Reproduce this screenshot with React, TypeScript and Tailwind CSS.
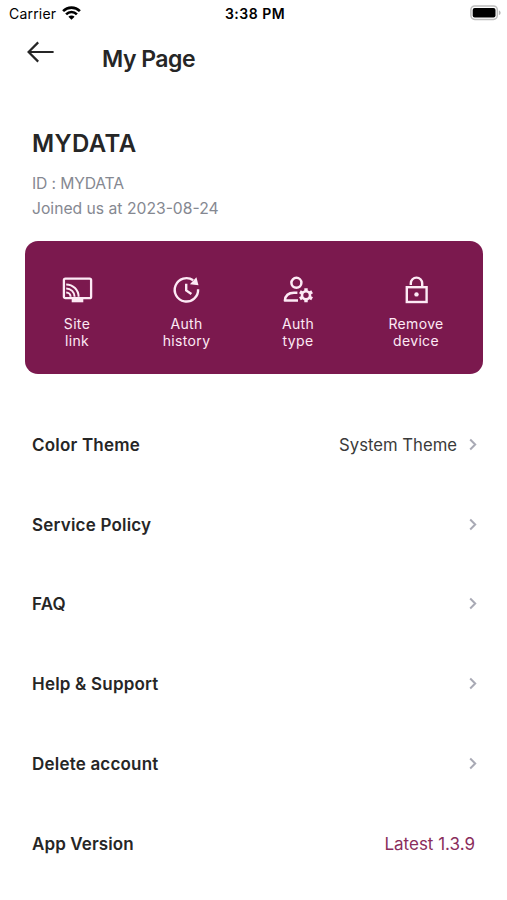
import React from 'react';

const menuItems = [
    { label: 'Color Theme', value: 'System Theme' },
    { label: 'Service Policy' },
    { label: 'FAQ' },
    { label: 'Help & Support' },
    { label: 'Delete account' }
];

/** Quick action icons, all on a 32px canvas */

function SiteLinkIcon() {
    return (
        <svg width="32" height="32" viewBox="0 0 32 32" fill="none" stroke="currentColor" strokeWidth="2.3">
            <rect x="2.9" y="4.6" width="27.2" height="19.6" rx="1.5" />
            <path d="M10.7 26.6h11.6" strokeWidth="3.4" />
            <path d="M5.2 10.4a12.4 12.4 0 0 1 12.4 12.4M5.2 14.4a8.4 8.4 0 0 1 8.4 8.4M5.2 18.4a4.4 4.4 0 0 1 4.4 4.4" strokeWidth="2" />
        </svg>
    );
}

function HistoryIcon() {
    return (
        <svg width="32" height="32" viewBox="0 0 32 32" fill="none" stroke="currentColor" strokeWidth="2.4">
            <path d="M27.1 15.2A11.7 11.7 0 1 1 22.2 6.3" />
            <path d="M25.4 3.2L27.5 11.2L18.9 10.2Z" fill="currentColor" stroke="none" />
            <path d="M15.2 9.8v6.6l5.2 3.6" />
        </svg>
    );
}

function AuthTypeIcon() {
    return (
        <svg width="32" height="32" viewBox="0 0 32 32" fill="none" stroke="currentColor" strokeWidth="2.5">
            <circle cx="14.4" cy="8.8" r="5" />
            <path d="M15.4 18.8H12C6 18.8 3.3 21.6 2.9 26.6H16" strokeLinejoin="round" />
            <circle cx="24" cy="21.3" r="4" strokeWidth="2.6" />
            <path
                d="M24 17.5v-3.2M24 25.1v3.2M20.5 19.3l-2.6-1.5M27.5 23.3l2.6 1.5M20.5 23.3l-2.6 1.5M27.5 19.3l2.6-1.5"
                strokeWidth="3.4"
            />
        </svg>
    );
}

function UnlockIcon() {
    return (
        <svg width="32" height="32" viewBox="0 0 32 32" fill="none" stroke="currentColor" strokeWidth="2.4">
            <rect x="6.8" y="13.2" width="19.8" height="14.8" />
            <path d="M10.8 11V9.3a5.7 5.7 0 0 1 11.4 0v3.9" />
            <circle cx="16.5" cy="20.4" r="2.2" fill="currentColor" stroke="none" />
        </svg>
    );
}

const actions = [
    { icon: <SiteLinkIcon />, lines: ['Site', 'link'] },
    { icon: <HistoryIcon />, lines: ['Auth', 'history'] },
    { icon: <AuthTypeIcon />, lines: ['Auth', 'type'] },
    { icon: <UnlockIcon />, lines: ['Remove', 'device'] }
];

function Chevron() {
    return (
        <svg width="8" height="14" viewBox="0 0 8 14" fill="none" stroke="#a9aab5" strokeWidth="2">
            <path d="M1.2 1.5 6.2 6.5l-5 5" />
        </svg>
    );
}

function StatusBar() {
    return (
        <div className="grid h-7 grid-cols-3 items-center pl-[9px] pr-[6px] text-black">
            <div className="flex items-center gap-1.5">
                <span className="text-[14px] leading-7 tracking-[0.2px]">Carrier</span>
                <svg className="-mt-0.5" width="19" height="14" viewBox="0 0 19 14" fill="none" stroke="currentColor" strokeWidth="2.6">
                    <path d="M1.1 5.1a11.9 11.9 0 0 1 16.8 0M4.1 8.3a7.6 7.6 0 0 1 10.8 0" />
                    <path d="M9.5 13.8 6.4 10.7a4.4 4.4 0 0 1 6.2 0Z" fill="currentColor" stroke="none" />
                </svg>
            </div>
            <span className="text-center text-[14px] font-semibold leading-7 tracking-[0.5px]">3:38 PM</span>
            <svg className="-mt-0.5 justify-self-end" width="31" height="16" viewBox="0 0 31 16">
                <rect x="0.9" y="1" width="26.4" height="13.4" rx="3.8" fill="#fff" stroke="#bdbdbd" strokeWidth="1.5" />
                <rect x="2.7" y="2.9" width="22.8" height="9.6" rx="2" fill="#000" />
                <path d="M28.9 5.4v4.6c1.1-.4 1.7-1.2 1.7-2.3s-.6-1.9-1.7-2.3Z" fill="#b5b5b5" />
            </svg>
        </div>
    );
}

export default function App() {
    return (
        <div className="h-[900px] w-[507px] overflow-hidden bg-white font-['Inter',sans-serif] text-[#262626]">
            <StatusBar />

            {/* Header */}
            <header className="flex h-[60px] items-start pl-[26px]">
                <svg className="mt-[13px]" width="28" height="22" viewBox="0 0 28 22" fill="none" stroke="currentColor" strokeWidth="2.2">
                    <path d="M27.6 11H3M12.2 1.4 2.6 11l9.6 9.6" />
                </svg>
                <h1 className="ml-12 mt-4 text-[23px] font-semibold leading-[30px] tracking-[-0.5px]">My Page</h1>
            </header>

            {/* Profile */}
            <section className="px-8 pt-10">
                <h2 className="text-[24px] font-semibold leading-8 tracking-[0.4px]">MYDATA</h2>
                <div className="mt-[11px] text-[15.7px] leading-[25px] text-[#858891]">
                    <p className="tracking-[-0.15px]">ID : MYDATA</p>
                    <p>Joined us at 2023-08-24</p>
                </div>
            </section>

            {/* Quick actions */}
            <section className="ml-[25px] mt-5 grid h-[133px] w-[458px] grid-cols-[104px_115px_108px_128px] rounded-[13px] bg-[#7b194e] pt-[33px] text-[#fdeaf5]">
                {actions.map((action) => (
                    <button key={action.lines.join(' ')} className="flex flex-col items-center self-start">
                        {action.icon}
                        <span className="mt-[9px] text-center text-[14px] leading-[17px] tracking-[0.35px]">
                            {action.lines[0]}
                            <br />
                            {action.lines[1]}
                        </span>
                    </button>
                ))}
            </section>

            {/* Menu */}
            <ul className="mt-[31px] pl-8 pr-[30px] text-[17px] leading-6">
                {menuItems.map((item) => (
                    <li key={item.label} className="flex h-[79.8px] items-center">
                        <span className="flex-1 font-semibold tracking-[0.2px]">{item.label}</span>
                        {item.value && <span className="mr-3 text-[16.7px] text-[#3a3a3a]">{item.value}</span>}
                        <Chevron />
                    </li>
                ))}
                <li className="flex h-[79.8px] items-center justify-between pr-0.5">
                    <span className="font-semibold tracking-[0.1px]">App Version</span>
                    <span className="text-[#8a2d5c]">Latest 1.3.9</span>
                </li>
            </ul>
        </div>
    );
}
